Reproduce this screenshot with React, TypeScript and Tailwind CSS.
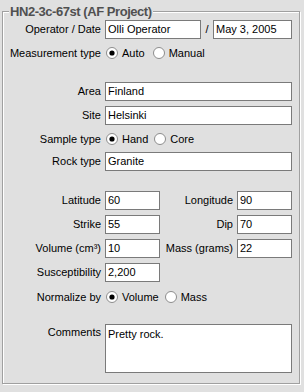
import React from "react";

const font = { fontFamily: '"Liberation Sans", Arial, sans-serif' };

function Radio({ checked }: { checked?: boolean }) {
  return (
    <svg width="12" height="12" viewBox="0 0 12 12" className="shrink-0">
      <circle cx="6" cy="6" r="5.5" fill="#ffffff" stroke="#8c8c8c" strokeWidth="1" />
      {checked && <circle cx="6" cy="6" r="2.6" fill="#000000" />}
    </svg>
  );
}

function Field({ value, w }: { value: string; w: string }) {
  return (
    <div
      className={`${w} h-[19px] border border-[#7a7a7a] bg-white flex items-center pl-[2px] text-[11px] text-black leading-none`}
    >
      {value}
    </div>
  );
}

function Label({ children, w = "w-[102px]" }: { children: React.ReactNode; w?: string }) {
  return <div className={`${w} shrink-0 text-right pr-[4px] text-[11px] text-black leading-none`}>{children}</div>;
}

function RadioRow({ label, a, b, gap }: { label: string; a: string; b: string; gap: string }) {
  return (
    <div className="flex items-center h-[14px]">
      <Label>{label}</Label>
      <div className="flex items-center pl-[1px] text-[11px] leading-none">
        <Radio checked />
        <span className="ml-[4px]">{a}</span>
        <span className={gap}>
          <Radio />
        </span>
        <span className="ml-[4px]">{b}</span>
      </div>
    </div>
  );
}

export default function App() {
  return (
    <div className="w-[304px] h-[392px] bg-[#e0e0e0] overflow-hidden" style={font}>
      <div className="pt-[11px] pl-[2px] pr-[4px]">
        <div className="relative h-[373px] border border-[#a0a0a0] shadow-[1px_1px_0_#ffffff,inset_1px_1px_0_#ffffff]">
          <div className="absolute left-[6px] top-[-9px] bg-[#e0e0e0] px-[1px] text-[13px] font-bold tracking-[-0.45px] text-[#505050] leading-[17px]">
            HN2-3c-67st (AF Project)
          </div>

          <div className="flex flex-col">
            <div className="flex items-center mt-[8px]">
              <Label>Operator / Date</Label>
              <Field value="Olli Operator" w="w-[96px]" />
              <div className="w-[12px] text-center text-[11px] leading-none">/</div>
              <Field value="May 3, 2005" w="w-[79px]" />
            </div>

            <div className="mt-[7px]">
              <RadioRow label="Measurement type" a="Auto" b="Manual" gap="ml-[8px]" />
            </div>

            <div className="flex items-center mt-[22px]">
              <Label>Area</Label>
              <Field value="Finland" w="w-[187px]" />
            </div>
            <div className="flex items-center mt-[5px]">
              <Label>Site</Label>
              <Field value="Helsinki" w="w-[187px]" />
            </div>

            <div className="mt-[7px]">
              <RadioRow label="Sample type" a="Hand" b="Core" gap="ml-[6px]" />
            </div>

            <div className="flex items-center mt-[6px]">
              <Label>Rock type</Label>
              <Field value="Granite" w="w-[187px]" />
            </div>

            <div className="flex items-center mt-[20px]">
              <Label>Latitude</Label>
              <Field value="60" w="w-[55px]" />
              <Label w="w-[77px]">Longitude</Label>
              <Field value="90" w="w-[55px]" />
            </div>
            <div className="flex items-center mt-[5px]">
              <Label>Strike</Label>
              <Field value="55" w="w-[55px]" />
              <Label w="w-[77px]">Dip</Label>
              <Field value="70" w="w-[55px]" />
            </div>
            <div className="flex items-center mt-[5px]">
              <Label>Volume (cm³)</Label>
              <Field value="10" w="w-[55px]" />
              <Label w="w-[77px]">Mass (grams)</Label>
              <Field value="22" w="w-[55px]" />
            </div>
            <div className="flex items-center mt-[5px]">
              <Label>Susceptibility</Label>
              <Field value="2,200" w="w-[55px]" />
            </div>

            <div className="mt-[8px]">
              <RadioRow label="Normalize by" a="Volume" b="Mass" gap="ml-[6px]" />
            </div>

            <div className="flex items-start mt-[20px]">
              <div className="w-[102px] shrink-0 text-right pr-[4px] text-[11px] leading-none pt-[3px]">Comments</div>
              <div className="w-[187px] h-[49px] border border-[#7a7a7a] bg-white pl-[2px] pt-[4px] text-[11px] leading-none">
                Pretty rock.
              </div>
            </div>
          </div>
        </div>
      </div>
    </div>
  );
}
